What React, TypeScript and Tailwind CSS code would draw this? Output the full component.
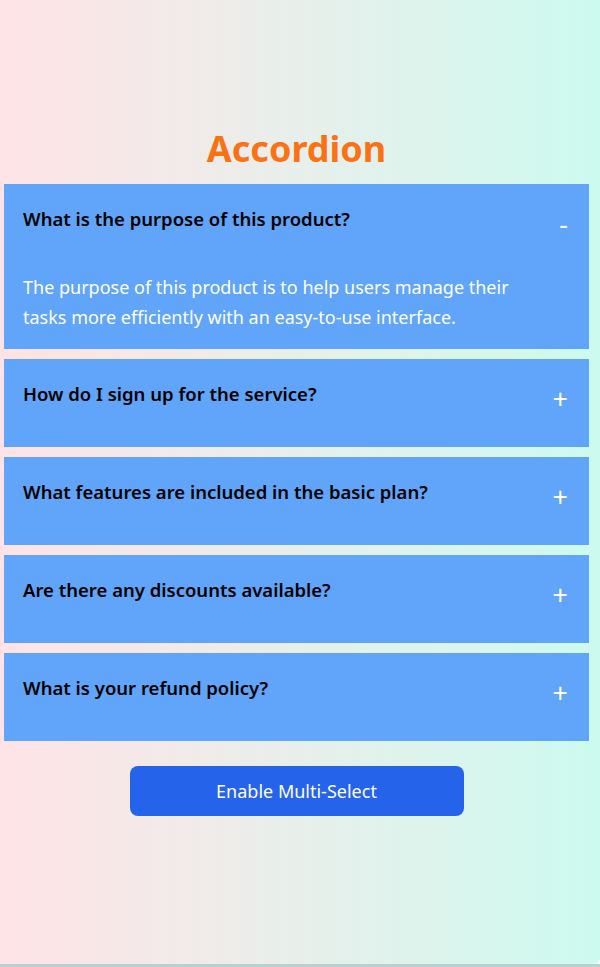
import { useState } from "react";

const faqs = [
  {
    q: "What is the purpose of this product?",
    a: "The purpose of this product is to help users manage their tasks more efficiently with an easy-to-use interface.",
  },
  {
    q: "How do I sign up for the service?",
    a: "Click the sign up button on the home page and follow the steps to create your account.",
  },
  {
    q: "What features are included in the basic plan?",
    a: "The basic plan includes task lists, reminders and syncing across two devices.",
  },
  {
    q: "Are there any discounts available?",
    a: "Yes, we offer discounts for students, non-profits and annual subscriptions.",
  },
  {
    q: "What is your refund policy?",
    a: "You can request a full refund within 30 days of your purchase.",
  },
];

function App() {
  const [open, setOpen] = useState<number[]>([0]);
  const [multi, setMulti] = useState(false);

  const toggle = (i: number) => {
    if (open.includes(i)) {
      setOpen(open.filter((x) => x !== i));
    } else {
      setOpen(multi ? [...open, i] : [i]);
    }
  };

  return (
    <div className="font-['Noto_Sans',sans-serif]">
      <div className="h-[964px] rounded-br-md bg-gradient-to-r from-[#ffe3e6] to-[#ccfaef]">
        <div className="w-[593px] flex flex-col items-center pt-[129px]">
          <h1 className="text-[36px] leading-10 font-bold text-[#f97316] mb-[15px]">
            Accordion
          </h1>

          <div className="w-[585px] flex flex-col gap-[10px]">
            {faqs.map((f, i) => {
              const isOpen = open.includes(i);
              return (
                <div key={f.q} className="bg-[#60a5fa]">
                  <button
                    type="button"
                    onClick={() => toggle(i)}
                    className="w-full flex justify-between items-start pl-[19px] pr-[21px] pt-[21px] pb-[39px] text-left"
                  >
                    <span className="text-[18.5px] leading-[28px] font-semibold text-black">
                      {f.q}
                    </span>
                    <span className="text-[27px] leading-[18px] text-white mt-[10px]">
                      {isOpen ? "-" : "+"}
                    </span>
                  </button>
                  {isOpen && (
                    <p className="pl-[19px] pr-[40px] pb-[17px] text-[18px] leading-[30px] text-white">
                      {f.a}
                    </p>
                  )}
                </div>
              );
            })}
          </div>

          <button
            type="button"
            onClick={() => setMulti(!multi)}
            className="mt-[25px] w-[334px] h-[50px] rounded-lg bg-[#2563eb] text-white text-[18px]"
          >
            {multi ? "Disable Multi-Select" : "Enable Multi-Select"}
          </button>
        </div>
      </div>
      <div className="h-[3px] bg-[#b7d0d0]" />
    </div>
  );
}

export default App;
